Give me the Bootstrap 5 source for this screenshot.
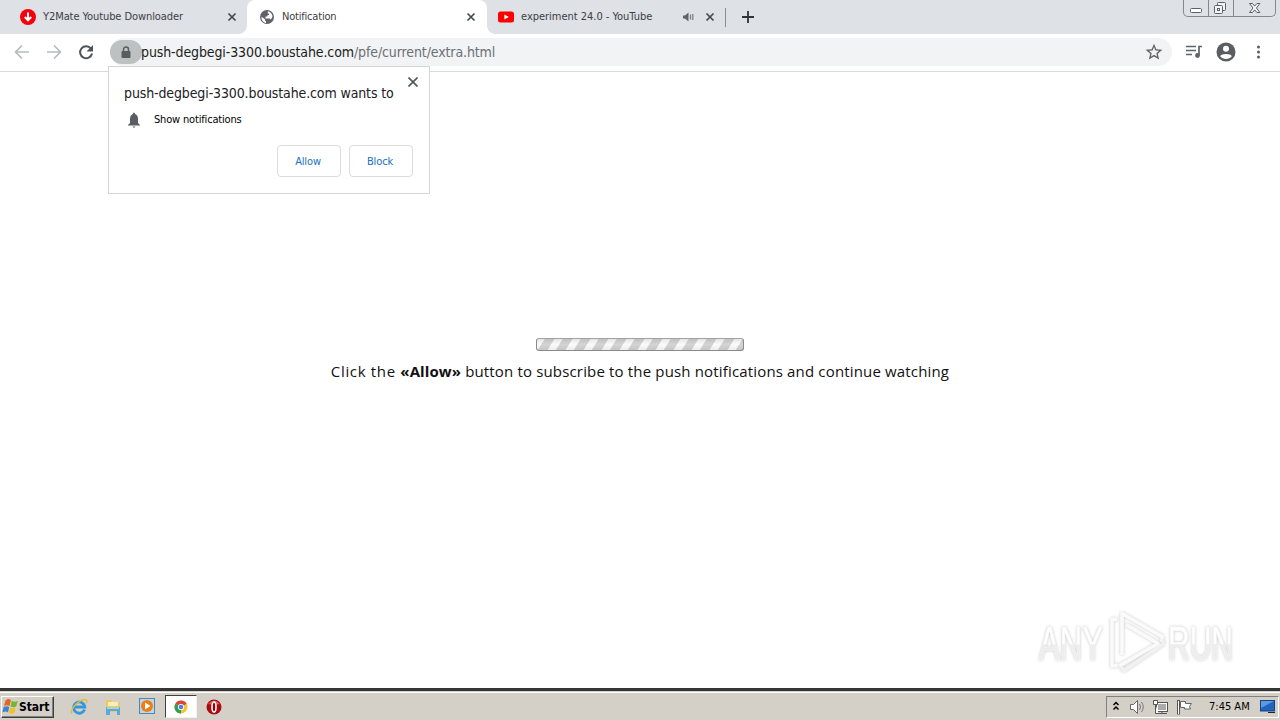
<!DOCTYPE html>
<html lang="en">
<head>
<meta charset="utf-8">
<title>Notification</title>
<link href="https://cdn.jsdelivr.net/npm/bootstrap@5.3.0/dist/css/bootstrap.min.css" rel="stylesheet">
<style>
html,body{height:100%;overflow:hidden}
body{font-family:"DejaVu Sans Condensed","DejaVu Sans",sans-serif;font-stretch:condensed;font-size:11px;line-height:14px;color:#202124;background:#fff}
svg{display:block;flex:none}
.screen{width:1280px;height:720px}
.tabstrip{height:34px;background:#dee1e6;color:#3c4043}
.tab{height:34px;flex:none}
.tab-label{flex:none;white-space:nowrap;margin-left:7px;letter-spacing:-.08px}
.tab-a{width:247px;padding-left:20px;padding-right:10px}
.tab-b{width:240px;padding-left:12px;padding-right:11px;background:#fff;border-radius:8px 8px 0 0}
.tab-b .tab-label{letter-spacing:-.2px}
.tab-b::before,.tab-b::after{content:"";position:absolute;bottom:0;width:8px;height:8px}
.tab-b::before{left:-8px;background:radial-gradient(circle at 0 0,transparent 7.5px,#fff 8px)}
.tab-b::after{right:-8px;background:radial-gradient(circle at 100% 0,transparent 7.5px,#fff 8px)}
.tab-c{width:239px;padding-left:11px;padding-right:10px;border-right:1px solid #8a8d91;height:19px}
.tab-c .tab-label{letter-spacing:-.02px}
.winbtns{height:17px;width:93px;border:1px solid #85888d;border-top:0;border-radius:0 0 5px 5px;margin-right:4px}
.winbtns>div{height:16px}
.winbtns>div+div{border-left:1px solid #85888d}
.toolbar{height:38px;border-bottom:1px solid #d8dadc;padding-bottom:1px}
.omni{width:1062px;height:28px;border-radius:14px;background:#f1f3f4;margin-left:16px}
.lock{width:32px;height:24px;border-radius:12px;background:#bdc1c1}
.url{font-size:14px;line-height:20px;white-space:nowrap;color:#1c1d20;letter-spacing:-.11px;margin-left:-1px}
.url i{font-style:normal;color:#6b7075}
.prompt{left:108px;top:66px;width:322px;height:128px;background:#fff;border:1px solid #d4d5d6;padding:17px 16px 15px 15px}
.prompt-title{font-size:14px;line-height:18px;white-space:nowrap;color:#202124;letter-spacing:-.12px}
.btn-ask{width:64px;height:32px;font-size:11px;line-height:14px;padding:1px 2px 0 0;border:1px solid #dadce0;border-radius:4px;color:#1a6fc0;background:#fff;letter-spacing:-.15px}
.page{background:#fff;color:#111}
.loader{width:208px;height:13px;border:1px solid #8f8f8f;border-color:#a2a2a2 #8b8b8b #8b8b8b;border-radius:3px;margin-top:266px;background:linear-gradient(rgba(120,120,120,.16),rgba(255,255,255,.1) 50%,rgba(120,120,120,.1)),repeating-linear-gradient(122deg,#fafafa 0 6px,#cfcfcf 7px 14.3px,#fafafa 15.26px)}
.msg{font-family:"Open Sans","Noto Sans",sans-serif;font-stretch:normal;font-size:15px;line-height:20px;margin-top:10px;white-space:nowrap;color:#111;letter-spacing:.16px}
.msg .lead-in{letter-spacing:.66px}
.msg b{letter-spacing:.1px}
.watermark{right:38px;bottom:8px;overflow:visible}
.taskbar{height:32px;background:#d4d0c8;border-top:3px solid #353535}
.taskbar-in{height:29px;border-top:1px solid #d4d0c8;box-shadow:inset 0 1px #fff;padding-top:1px}
.start{width:53px;height:22px;margin-left:1px;border:1px solid;border-color:#fff #404040 #404040 #fff;box-shadow:inset -1px -1px #808080;color:#000}
.start b{font-size:12px;letter-spacing:-.1px}
.task-on{width:32px;height:23px;background:#fff;border:1px solid;border-color:#404040 #f4f2ee #f4f2ee #404040}
.tray{width:173px;height:22px;border:1px solid;border-color:#808080 #fff #fff #808080;margin-right:1px;color:#000}
</style>
</head>
<body>
<div class="screen position-relative d-flex flex-column">
  <header class="tabstrip d-flex align-items-center flex-shrink-0">
    <div class="tab tab-a d-flex align-items-center">
      <svg width="16" height="16"><circle cx="8" cy="8" r="8" fill="#f5000c"/><path d="M8 3.5v7M4.8 8L8 11.3 11.2 8" stroke="#fff" stroke-width="2" fill="none"/></svg>
      <span class="tab-label">Y2Mate Youtube Downloader</span>
      <svg class="ms-auto" width="10" height="10"><path d="M1.5 1.5l7 7m0-7l-7 7" stroke="#45494d" stroke-width="1.7"/></svg>
    </div>
    <div class="tab tab-b d-flex align-items-center position-relative">
      <svg width="16" height="16" viewBox="0 0 16 16"><circle cx="8" cy="8" r="7" fill="#5f6368"/><path d="M2.4 7.8L6 10.2v1.200l1 .8v1.800A6 6 0 012.4 7.800zM8.800 2.200A6 6 0 0113.500 7.200q-.3 2-1.800 3.300L10.500 9.500H6.500V7.500H8.500V6H10V4.500H8.800z" fill="#fff"/></svg>
      <span class="tab-label">Notification</span>
      <svg class="ms-auto" width="10" height="10"><path d="M1.500 1.500l7 7m0-7l-7 7" stroke="#45494d" stroke-width="1.700"/></svg>
    </div>
    <div class="tab tab-c d-flex align-items-center">
      <svg width="16" height="12"><rect y=".5" width="16" height="11" rx="2.500" fill="#f00"/><path d="M6.300 3.500v5L10.800 6z" fill="#fff"/></svg>
      <span class="tab-label">experiment 24.0 - YouTube</span>
      <svg class="ms-auto" width="12" height="10"><path d="M0 3.500h2L5.500.5v9L2 6.500H0z" fill="#5f6368"/><path d="M7.500 2.500v5M9.800 2v6" stroke="#777b80" stroke-width="1.200"/></svg>
      <svg width="10" height="10" style="margin-left:10px"><path d="M1.500 1.500l7 7m0-7l-7 7" stroke="#45494d" stroke-width="1.700"/></svg>
    </div>
    <svg class="ms-3" width="12" height="12"><path d="M6 0v12M0 6h12" stroke="#303337" stroke-width="1.800"/></svg>
    <div class="winbtns d-flex ms-auto align-self-start">
      <div style="width:25px"><svg width="24" height="16"><rect x="6.500" y="8.500" width="11" height="4" rx="1" fill="#fff" stroke="#5d6065"/></svg></div>
      <div style="width:25px"><svg width="24" height="16"><rect x="8.500" y="2.500" width="8" height="8" rx="1" fill="#f3f4f6" stroke="#5d6065"/><rect x="5.500" y="5.500" width="8" height="8" rx="1" fill="#f3f4f6" stroke="#5d6065"/><rect x="8.500" y="8.500" width="2" height="2" fill="#fff" stroke="#5d6065"/></svg></div>
      <div class="flex-fill"><svg width="41" height="16"><path d="M15.500 3.500h3l2.200 2.600 2.200-2.600h3l-3.500 4.500 3.500 4.500h-3l-2.200-2.600-2.200 2.600h-3l3.500-4.500z" fill="#f5f5f7" stroke="#5d6065"/></svg></div>
    </div>
  </header>

  <nav class="toolbar d-flex align-items-center flex-shrink-0 bg-white">
    <svg width="94" height="24" viewBox="0 0 94 24"><g fill="none" stroke="#b9bbbe" stroke-width="1.700"><path d="M29 12H16M22 5.500L15.500 12l6.500 6.500M47 12h13M54 5.500l6.500 6.500-6.500 6.500"/></g><path d="M91 8.800A6 6 0 1 0 92 13.500" fill="none" stroke="#505458" stroke-width="2"/><path d="M93 5v6.500h-6.500z" fill="#505458"/></svg>
    <div class="omni d-flex align-items-center">
      <div class="lock d-flex align-items-center justify-content-center"><svg width="10" height="13"><path d="M2.500 6V3.500a2.500 2.500 0 015 0V6" fill="none" stroke="#5a5d60" stroke-width="1.500"/><rect x=".5" y="5" width="9" height="7" rx="1" fill="#5a5d60"/></svg></div>
      <span class="url">push-degbegi-3300.boustahe.com<i>/pfe/current/extra.html</i></span>
      <svg class="ms-auto me-2" width="20" height="20" viewBox="0 0 24 24"><path d="M22 9.240l-7.190-.620L12 2 9.190 8.630 2 9.240l5.460 4.730L5.820 21 12 17.270 18.180 21l-1.630-7.030L22 9.240zM12 15.400l-3.760 2.270 1-4.280-3.320-2.880 4.380-.38L12 6.100l1.710 4.040 4.380.38-3.320 2.880 1 4.280L12 15.400z" fill="#5f6368"/></svg>
    </div>
    <svg style="margin-left:13px" width="18" height="16"><path d="M1 2.500h10M1 6.500h10M1 10.500h6M14 11V2.500h3" stroke="#5f6368" stroke-width="1.700" fill="none"/><circle cx="12.500" cy="11.500" r="2.400" fill="#5f6368"/></svg>
    <svg style="margin-left:13px" width="20" height="20"><circle cx="10" cy="10" r="9.500" fill="#5a5d61"/><circle cx="10" cy="6.800" r="3" fill="#fff"/><path d="M4.200 14.200C5 11.300 15 11.300 15.800 14.200 13 17.800 7 17.800 4.200 14.200z" fill="#fff"/></svg>
    <svg style="margin-left:20px" width="5" height="16"><g fill="#5a5d61"><circle cx="2.500" cy="3" r="1.500"/><circle cx="2.500" cy="8" r="1.500"/><circle cx="2.500" cy="13" r="1.500"/></g></svg>
  </nav>

  <main class="page flex-fill d-flex flex-column align-items-center position-relative">
    <div class="loader flex-shrink-0"></div>
    <p class="msg mb-0"><span class="lead-in">Click the </span><b>«Allow»</b> button to subscribe to the push notifications and continue watching</p>
    <svg class="watermark position-absolute" width="212" height="76" viewBox="1030 602 212 76">
      <defs><linearGradient id="shine" x1="0" y1="0" x2="0" y2="1"><stop offset=".52" stop-color="#fff"/><stop offset=".53" stop-color="#ededed"/></linearGradient>
      <filter id="halo" x="-10%" y="-20%" width="120%" height="140%"><feDropShadow dx="0" dy="0" stdDeviation="1.500" flood-color="#777" flood-opacity=".45"/></filter></defs>
      <g filter="url(#halo)" fill="url(#shine)" stroke="#f6f6f6" stroke-width=".6" font-family="Liberation Sans Narrow, Liberation Sans, sans-serif" font-size="49">
        <text x="1039" y="658" textLength="64" lengthAdjust="spacingAndGlyphs">ANY</text>
        <text x="1168" y="658" textLength="65" lengthAdjust="spacingAndGlyphs">RUN</text>
      </g>
      <g filter="url(#halo)" fill="none" stroke="#fafafa" stroke-width="3.500" stroke-linejoin="round">
        <path d="M1117 617.500H1112V664L1118 663"/>
        <path d="M1122 653V611.500L1162 634.500V640"/>
        <path d="M1126 622.500L1158 641.500 1119 664"/>
        <path d="M1163 637V642L1124 668.500 1121 665" stroke="#f1f1f1"/>
      </g>
    </svg>
  </main>

  <footer class="taskbar flex-shrink-0">
    <div class="taskbar-in d-flex align-items-center">
      <div class="start d-flex align-items-center">
        <svg width="17" height="17" viewBox="0 0 17 17"><path d="M3.500 2.500q3-2.500 5.500-.5L7.500 8Q5 6.500 2 8z" fill="#e9622a"/><path d="M9.800 2.800q3 2 6.200 0l-1.800 5.700q-2.500 1.500-5.700 0z" fill="#76b82d"/><path d="M1.700 9Q5 7.500 7.200 9L6 14.500Q4 12.500.3 14.500z" fill="#3d82d0"/><path d="M8.300 9.500q3 1.500 5.500 0l-1.500 5.500q-2.500 1.500-5.300 0z" fill="#f5be25"/></svg>
        <b>Start</b>
      </div>
      <svg style="margin-left:16px" width="18" height="18" viewBox="0 0 18 18"><path d="M14.500 11.500A5.600 5.600 0 1 1 14.800 9H5" fill="none" stroke="#3499dc" stroke-width="2.800"/><path d="M2 15.500C-1 12 11-1 16.500 2c1 .8.500 2-.5 3" fill="none" stroke="#e8b83c" stroke-width="1.400"/></svg>
      <svg style="margin-left:17px" width="17" height="18"><path d="M1 2h5l1 2h8v10H1z" fill="#ecca5c"/><path d="M3 4h10v4H3z" fill="#fbeeb0"/><path d="M1 9h14v8h-3v-4H5v4H1z" fill="#5aa9d8"/><path d="M2 9h12v2H2z" fill="#a7d3e6"/></svg>
      <svg style="margin-left:17px" width="17" height="17"><rect x=".5" y=".5" width="15" height="15" fill="#b9d8ee" stroke="#4d86b4"/><circle cx="8" cy="8" r="6" fill="#f17c13"/><path d="M6 4.500v7L11.500 8z" fill="#fff"/></svg>
      <div class="task-on d-flex align-items-center justify-content-center" style="margin-left:9px"><svg width="14" height="14" viewBox="0 0 14 14"><circle cx="7" cy="7" r="6.500" fill="#f6c52c"/><path d="M7 7L1.370 3.750A6.500 6.500 0 0112.630 3.750z" fill="#dd4435"/><path d="M7 7L1.370 3.750A6.500 6.500 0 007 13.500z" fill="#329c50"/><circle cx="7" cy="7" r="3.100" fill="#fff"/><circle cx="7" cy="7" r="2.300" fill="#4280ed"/></svg></div>
      <svg style="margin-left:9px" width="16" height="16"><circle cx="8" cy="8" r="7.500" fill="#a90c10"/><path d="M2 5Q8-2 14 5L8 6z" fill="#dd5a50"/><ellipse cx="8" cy="8" rx="2" ry="5" fill="#900" stroke="#fff" stroke-width="1.600"/></svg>
      <div class="tray d-flex align-items-center ms-auto">
        <svg style="margin-left:5px" width="8" height="12"><path d="M1.500 4l2.500-2.500L6.500 4M1.500 8.500L4 6l2.500 2.500" fill="none" stroke="#000" stroke-width="1.500"/></svg>
        <svg style="margin-left:9px" width="17" height="16"><path d="M1.500 5.500h3l4-4v13l-4-4h-3z" fill="#fff" stroke="#666"/><path d="M10.500 5q2 3 0 6M12.500 3q3.500 5 0 10" fill="none" stroke="#777"/></svg>
        <svg style="margin-left:6px" width="18" height="16"><rect x="4.500" y="3.500" width="11" height="9" fill="#bbb" stroke="#555"/><rect x="5.500" y="4.500" width="9" height="7" fill="#aaa" stroke="#fff"/><path d="M6 14.500h9M10 12v2" stroke="#555"/><path d="M1.500 1.500h4v4h-4zM3.500 5.500v9h3" fill="#fff" stroke="#555"/></svg>
        <svg style="margin-left:6px" width="17" height="16"><path d="M2.500 1v14.500" stroke="#555" stroke-width="3"/><path d="M2.500 2v13" stroke="#fff"/><path d="M4.500 2.500h5v2h6l-2 3 1 2.500h-6v-1.500h-4z" fill="#fff" stroke="#666"/></svg>
        <span class="text-nowrap" style="margin-left:16px">7:45 AM</span>
        <svg class="ms-auto" style="margin-right:2px" width="16" height="14"><rect x=".5" y=".5" width="14" height="10.500" fill="#2163bd" stroke="#174181"/><path d="M1 1h13L1 8z" fill="#5b9ce0"/><path d="M8 12.500h7" stroke="#222"/></svg>
      </div>
    </div>
  </footer>

  <section class="prompt position-absolute">
    <div class="prompt-title">push-degbegi-3300.boustahe.com wants to</div>
    <svg class="position-absolute" style="right:11px;top:10px" width="10" height="10"><path d="M.5.5l9 9m0-9l-9 9" stroke="#55585c" stroke-width="1.700"/></svg>
    <div class="d-flex align-items-center" style="margin-top:10px">
      <svg style="margin-left:3px" width="14" height="16"><path d="M7 .5q1 0 1 1.500 3 1 3 5V11l2 2v.5H1V13l2-2V7q0-4 3-5Q6 .5 7 .5zM5.500 14.500h3L7 16z" fill="#5a5d61"/></svg>
      <span style="margin-left:13px;color:#000;letter-spacing:-.17px">Show notifications</span>
    </div>
    <div class="d-flex justify-content-end gap-2" style="margin-top:17px">
      <button class="btn btn-ask" type="button">Allow</button>
      <button class="btn btn-ask" type="button">Block</button>
    </div>
  </section>
</div>
<script src="https://cdn.jsdelivr.net/npm/bootstrap@5.3.0/dist/js/bootstrap.bundle.min.js"></script>
</body>
</html>
